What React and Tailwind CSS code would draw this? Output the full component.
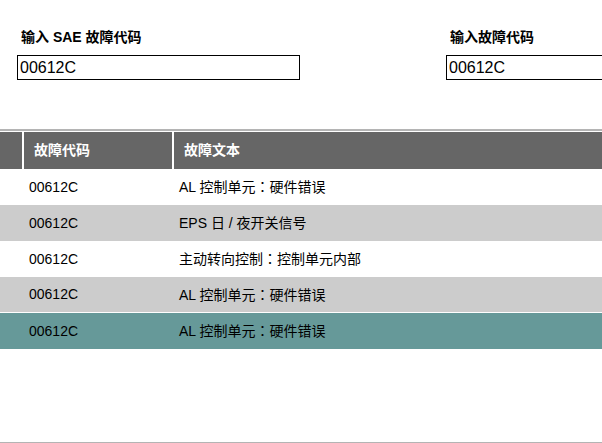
import React from "react";

const C = () => <span style={{ fontFamily: '"Noto Sans CJK TC", sans-serif' }}>：</span>;

const rows = [
  { code: "00612C", text: <>AL 控制单元<C />硬件错误</>, bg: "bg-white" },
  { code: "00612C", text: "EPS 日 / 夜开关信号", bg: "bg-[#cccccc]" },
  { code: "00612C", text: <>主动转向控制<C />控制单元内部</>, bg: "bg-white" },
  { code: "00612C", text: <>AL 控制单元<C />硬件错误</>, bg: "bg-[#cccccc]" },
  { code: "00612C", text: <>AL 控制单元<C />硬件错误</>, bg: "bg-[#669999]" },
];

export default function App() {
  return (
    <div
      className="w-[602px] h-[443px] overflow-hidden bg-white flex flex-col text-black"
      style={{ fontFamily: '"Liberation Sans", Arial, "Noto Sans CJK SC", sans-serif' }}
    >
      <div className="flex pt-[29px] pl-[17px] gap-[146px] shrink-0">
        <div className="flex flex-col shrink-0">
          <div className="pl-[4px] text-[14px] leading-[16px] font-bold">输入 SAE 故障代码</div>
          <div className="mt-[10px] w-[283px] h-[25px] border border-black flex items-center px-[2px] text-[16px]">
            00612C
          </div>
        </div>
        <div className="flex flex-col shrink-0">
          <div className="pl-[4px] text-[14px] leading-[16px] font-bold">输入故障代码</div>
          <div className="mt-[10px] w-[283px] h-[25px] border border-black flex items-center px-[2px] text-[16px]">
            00612C
          </div>
        </div>
      </div>

      <div className="mt-[49px] h-[2px] bg-[#b4b4b4] shrink-0" />
      <div className="mt-[1px] flex h-[37px] bg-white gap-[2px] shrink-0 text-white text-[14px] font-bold">
        <div className="w-[22px] bg-[#666666]" />
        <div className="w-[148px] bg-[#666666] flex items-center pl-[10px]">故障代码</div>
        <div className="flex-1 bg-[#666666] flex items-center pl-[10px]">故障文本</div>
      </div>
      {rows.map((r, i) => (
        <div
          key={i}
          className={`flex h-[36px] items-center text-[14px] shrink-0 ${r.bg} ${i === 3 ? "border-b border-white" : ""}`}
        >
          <div className="w-[29px]" />
          <div className="w-[150px]">{r.code}</div>
          <div className="flex-1">{r.text}</div>
        </div>
      ))}
      <div className="flex-1" />
      <div className="h-[1px] bg-[#b4b4b4] shrink-0" />
    </div>
  );
}
